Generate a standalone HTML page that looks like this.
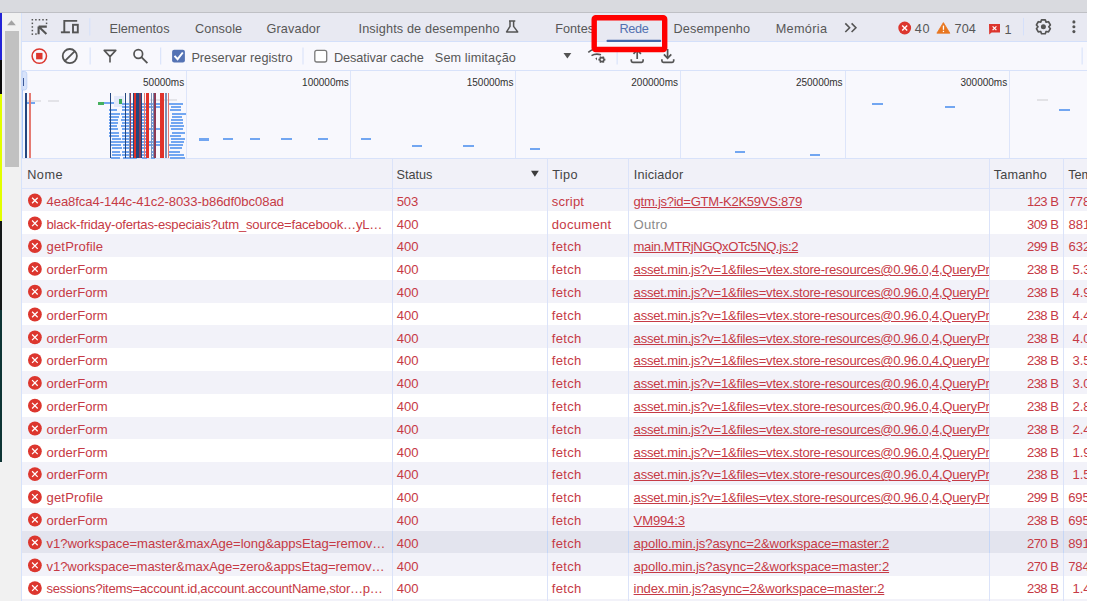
<!DOCTYPE html>
<html><head><meta charset="utf-8">
<style>
html,body{margin:0;padding:0;width:1093px;height:601px;overflow:hidden;background:#ffffff;}
body{position:relative;font-family:"Liberation Sans",sans-serif;}
.a{position:absolute;}
.t{position:absolute;white-space:pre;font-family:"Liberation Sans",sans-serif;}
.clipw{position:absolute;overflow:hidden;}
.ov{position:absolute;left:0;top:0;}
.ic{position:absolute;left:0;top:0;}
</style></head><body>
<!-- top gray bar -->
<div class="a" style="left:0;top:0;width:1087px;height:12px;background:#d9dadf"></div>
<div class="a" style="left:0;top:12px;width:1087px;height:1px;background:#bfc0c5"></div>
<!-- left color strip -->
<div class="a" style="left:0;top:13px;width:2px;height:47px;background:#2424d6"></div>
<div class="a" style="left:0;top:60px;width:2px;height:34px;background:#0a0a0a"></div>
<div class="a" style="left:0;top:94px;width:2px;height:127px;background:#e2ff00"></div>
<div class="a" style="left:0;top:221px;width:2px;height:89px;background:#141818"></div>
<div class="a" style="left:0;top:310px;width:2px;height:152px;background:#0d3434"></div>
<div class="a" style="left:0;top:462px;width:2px;height:139px;background:#f1f1f1"></div>
<!-- scrollbar -->
<div class="a" style="left:2px;top:13px;width:19px;height:588px;background:#f1f1f1"></div>
<div class="a" style="left:5px;top:31px;width:14px;height:136px;background:#c1c1c1"></div>
<!-- panel -->
<div class="a" style="left:21px;top:13px;width:1px;height:588px;background:#d6e2fb"></div>
<div class="a" style="left:22px;top:13px;width:1065px;height:28px;background:#e8e9f2"></div>
<div class="a" style="left:22px;top:41px;width:1065px;height:1px;background:#d4e0fa"></div>
<div class="a" style="left:22px;top:42px;width:1065px;height:28px;background:#f8f8fd"></div>
<div class="a" style="left:22px;top:70px;width:1065px;height:1px;background:#d8e2fa"></div>
<div class="a" style="left:22px;top:71px;width:1065px;height:87px;background:#f8f8fd"></div>
<div class="a" style="left:22px;top:158px;width:1065px;height:1px;background:#d8e2fa"></div>
<div class="a" style="left:22px;top:159px;width:1065px;height:29px;background:#f1f1f8"></div>
<div class="a" style="left:22px;top:188px;width:1065px;height:1px;background:#dce4fa"></div>
<div class="a" style="left:22px;top:189px;width:1065px;height:22px;background:#f2f2f9"></div>
<div class="a" style="left:22px;top:211px;width:1065px;height:23px;background:#ffffff"></div>
<div class="a" style="left:22px;top:234px;width:1065px;height:23px;background:#f2f2f9"></div>
<div class="a" style="left:22px;top:257px;width:1065px;height:23px;background:#ffffff"></div>
<div class="a" style="left:22px;top:280px;width:1065px;height:23px;background:#f2f2f9"></div>
<div class="a" style="left:22px;top:303px;width:1065px;height:22px;background:#ffffff"></div>
<div class="a" style="left:22px;top:325px;width:1065px;height:23px;background:#f2f2f9"></div>
<div class="a" style="left:22px;top:348px;width:1065px;height:23px;background:#ffffff"></div>
<div class="a" style="left:22px;top:371px;width:1065px;height:23px;background:#f2f2f9"></div>
<div class="a" style="left:22px;top:394px;width:1065px;height:23px;background:#ffffff"></div>
<div class="a" style="left:22px;top:417px;width:1065px;height:22px;background:#f2f2f9"></div>
<div class="a" style="left:22px;top:439px;width:1065px;height:23px;background:#ffffff"></div>
<div class="a" style="left:22px;top:462px;width:1065px;height:23px;background:#f2f2f9"></div>
<div class="a" style="left:22px;top:485px;width:1065px;height:23px;background:#ffffff"></div>
<div class="a" style="left:22px;top:508px;width:1065px;height:23px;background:#f2f2f9"></div>
<div class="a" style="left:22px;top:531px;width:1065px;height:22px;background:#e3e4ee"></div>
<div class="a" style="left:22px;top:553px;width:1065px;height:23px;background:#f2f2f9"></div>
<div class="a" style="left:22px;top:576px;width:1065px;height:23px;background:#ffffff"></div>
<div class="a" style="left:22px;top:599px;width:1065px;height:23px;background:#f2f2f9"></div>
<div class="a" style="left:392px;top:159px;width:1px;height:442px;background:#dbe3f9"></div>
<div class="a" style="left:547px;top:159px;width:1px;height:442px;background:#dbe3f9"></div>
<div class="a" style="left:628px;top:159px;width:1px;height:442px;background:#dbe3f9"></div>
<div class="a" style="left:989px;top:159px;width:1px;height:442px;background:#dbe3f9"></div>
<div class="a" style="left:1063px;top:159px;width:1px;height:442px;background:#dbe3f9"></div>
<div class="a" style="left:392px;top:531px;width:1px;height:22px;background:#c5d6f6"></div>
<div class="a" style="left:547px;top:531px;width:1px;height:22px;background:#c5d6f6"></div>
<div class="a" style="left:628px;top:531px;width:1px;height:22px;background:#c5d6f6"></div>
<div class="a" style="left:989px;top:531px;width:1px;height:22px;background:#c5d6f6"></div>
<div class="a" style="left:1063px;top:531px;width:1px;height:22px;background:#c5d6f6"></div>
<svg class="ov" width="1093" height="601" shape-rendering="crispEdges"><rect x="186" y="71" width="1" height="87" fill="#dde5fa"/><rect x="350" y="71" width="1" height="87" fill="#dde5fa"/><rect x="515" y="71" width="1" height="87" fill="#dde5fa"/><rect x="680" y="71" width="1" height="87" fill="#dde5fa"/><rect x="845" y="71" width="1" height="87" fill="#dde5fa"/><rect x="1009" y="71" width="1" height="87" fill="#dde5fa"/><path d="M22 71.5 H24.5 Q26.8 71.5 26.8 73.8 V87.7 Q26.8 90 24.5 90 H22 Z" fill="#d8e3fa" stroke="#b9cef6" stroke-width="0.8" shape-rendering="geometricPrecision"/><rect x="23" y="78" width="1.4" height="7.5" fill="#3d5a99"/><rect x="22" y="90" width="1.3" height="68" fill="#a9c6f7"/><rect x="26" y="99.5" width="15" height="2" fill="#e3e3e8"/><rect x="48" y="99.5" width="10.5" height="2" fill="#e3e3e8"/><rect x="150" y="99" width="27" height="2" fill="#e3e3e8"/><rect x="1037" y="99" width="10.5" height="2.2" fill="#e2e2e6"/><rect x="25.4" y="102.4" width="10" height="2" fill="#72a6f1"/><rect x="114" y="96.4" width="10" height="11" fill="#e3e9fb"/><rect x="118.9" y="98.7" width="3.5" height="5.6" fill="#3dab5a"/><rect x="98" y="102.4" width="6" height="2.2" fill="#46b05e"/><rect x="104" y="102.4" width="10" height="2.0" fill="#72a6f1"/><rect x="121.6" y="103.0" width="12.5" height="2" fill="#72a6f1"/><rect x="142" y="103.0" width="5" height="2" fill="#72a6f1"/><rect x="151" y="103.0" width="4" height="2" fill="#72a6f1"/><rect x="142" y="103.0" width="18" height="2" fill="#72a6f1"/><rect x="169.2" y="103.0" width="13.9" height="2" fill="#72a6f1"/><rect x="122.1" y="106.2" width="13.1" height="2" fill="#72a6f1"/><rect x="142" y="106.2" width="5" height="2" fill="#72a6f1"/><rect x="151" y="106.2" width="4" height="2" fill="#72a6f1"/><rect x="142" y="106.2" width="18" height="2" fill="#72a6f1"/><rect x="170.5" y="106.2" width="10.3" height="2" fill="#72a6f1"/><rect x="109.0" y="109.3" width="8.1" height="2" fill="#72a6f1"/><rect x="121.9" y="109.3" width="12.2" height="2" fill="#72a6f1"/><rect x="142" y="109.3" width="5" height="2" fill="#72a6f1"/><rect x="151" y="109.3" width="4" height="2" fill="#72a6f1"/><rect x="170.3" y="109.3" width="10.5" height="2" fill="#72a6f1"/><rect x="109.0" y="112.5" width="10.5" height="2" fill="#72a6f1"/><rect x="121.2" y="112.5" width="12.7" height="2" fill="#72a6f1"/><rect x="142" y="112.5" width="5" height="2" fill="#72a6f1"/><rect x="151" y="112.5" width="4" height="2" fill="#72a6f1"/><rect x="171.8" y="112.5" width="13.8" height="2" fill="#72a6f1"/><rect x="109.0" y="115.7" width="9.7" height="2" fill="#72a6f1"/><rect x="121.8" y="115.7" width="14.9" height="2" fill="#72a6f1"/><rect x="142" y="115.7" width="5" height="2" fill="#72a6f1"/><rect x="151" y="115.7" width="4" height="2" fill="#72a6f1"/><rect x="171.6" y="115.7" width="10.3" height="2" fill="#72a6f1"/><rect x="109.0" y="118.8" width="8.9" height="2" fill="#72a6f1"/><rect x="121.3" y="118.8" width="12.4" height="2" fill="#72a6f1"/><rect x="142" y="118.8" width="5" height="2" fill="#72a6f1"/><rect x="151" y="118.8" width="4" height="2" fill="#72a6f1"/><rect x="171.4" y="118.8" width="11.9" height="2" fill="#72a6f1"/><rect x="109.0" y="122.0" width="8.5" height="2" fill="#72a6f1"/><rect x="122.2" y="122.0" width="13.9" height="2" fill="#72a6f1"/><rect x="142" y="122.0" width="5" height="2" fill="#72a6f1"/><rect x="151" y="122.0" width="4" height="2" fill="#72a6f1"/><rect x="170.6" y="122.0" width="12.2" height="2" fill="#72a6f1"/><rect x="109.0" y="125.2" width="8.2" height="2" fill="#72a6f1"/><rect x="121.1" y="125.2" width="12.6" height="2" fill="#72a6f1"/><rect x="142" y="125.2" width="5" height="2" fill="#72a6f1"/><rect x="151" y="125.2" width="4" height="2" fill="#72a6f1"/><rect x="170.3" y="125.2" width="14.1" height="2" fill="#72a6f1"/><rect x="109.0" y="128.4" width="8.9" height="2" fill="#72a6f1"/><rect x="122.2" y="128.4" width="13.4" height="2" fill="#72a6f1"/><rect x="142" y="128.4" width="5" height="2" fill="#72a6f1"/><rect x="151" y="128.4" width="4" height="2" fill="#72a6f1"/><rect x="142" y="128.4" width="18" height="2" fill="#72a6f1"/><rect x="171.4" y="128.4" width="11.8" height="2" fill="#72a6f1"/><rect x="109.0" y="131.5" width="10.1" height="2" fill="#72a6f1"/><rect x="121.5" y="131.5" width="13.7" height="2" fill="#72a6f1"/><rect x="142" y="131.5" width="5" height="2" fill="#72a6f1"/><rect x="151" y="131.5" width="4" height="2" fill="#72a6f1"/><rect x="171.6" y="131.5" width="13.2" height="2" fill="#72a6f1"/><rect x="109.0" y="134.7" width="10.2" height="2" fill="#72a6f1"/><rect x="121.6" y="134.7" width="14.9" height="2" fill="#72a6f1"/><rect x="142" y="134.7" width="5" height="2" fill="#72a6f1"/><rect x="151" y="134.7" width="4" height="2" fill="#72a6f1"/><rect x="170.3" y="134.7" width="10.7" height="2" fill="#72a6f1"/><rect x="112.0" y="137.9" width="8.5" height="2" fill="#72a6f1"/><rect x="122.0" y="137.9" width="12.1" height="2" fill="#72a6f1"/><rect x="142" y="137.9" width="5" height="2" fill="#72a6f1"/><rect x="151" y="137.9" width="4" height="2" fill="#72a6f1"/><rect x="171.3" y="137.9" width="14.0" height="2" fill="#72a6f1"/><rect x="111.3" y="141.0" width="10.6" height="2" fill="#72a6f1"/><rect x="121.6" y="141.0" width="14.1" height="2" fill="#72a6f1"/><rect x="142" y="141.0" width="5" height="2" fill="#72a6f1"/><rect x="151" y="141.0" width="4" height="2" fill="#72a6f1"/><rect x="142" y="141.0" width="18" height="2" fill="#72a6f1"/><rect x="170.7" y="141.0" width="13.6" height="2" fill="#72a6f1"/><rect x="110.8" y="144.2" width="10.5" height="2" fill="#72a6f1"/><rect x="122.9" y="144.2" width="13.4" height="2" fill="#72a6f1"/><rect x="142" y="144.2" width="5" height="2" fill="#72a6f1"/><rect x="151" y="144.2" width="4" height="2" fill="#72a6f1"/><rect x="142" y="144.2" width="18" height="2" fill="#72a6f1"/><rect x="169.2" y="144.2" width="14.0" height="2" fill="#72a6f1"/><rect x="111.8" y="147.4" width="9.9" height="2" fill="#72a6f1"/><rect x="123.0" y="147.4" width="14.5" height="2" fill="#72a6f1"/><rect x="142" y="147.4" width="5" height="2" fill="#72a6f1"/><rect x="151" y="147.4" width="4" height="2" fill="#72a6f1"/><rect x="170.2" y="147.4" width="11.7" height="2" fill="#72a6f1"/><rect x="111.7" y="150.6" width="8.1" height="2" fill="#72a6f1"/><rect x="121.9" y="150.6" width="12.5" height="2" fill="#72a6f1"/><rect x="142" y="150.6" width="5" height="2" fill="#72a6f1"/><rect x="151" y="150.6" width="4" height="2" fill="#72a6f1"/><rect x="169.2" y="150.6" width="10.7" height="2" fill="#72a6f1"/><rect x="112.1" y="153.7" width="8.4" height="2" fill="#72a6f1"/><rect x="121.5" y="153.7" width="13.2" height="2" fill="#72a6f1"/><rect x="142" y="153.7" width="5" height="2" fill="#72a6f1"/><rect x="151" y="153.7" width="4" height="2" fill="#72a6f1"/><rect x="169.2" y="153.7" width="15.2" height="2" fill="#72a6f1"/><rect x="110.8" y="156.9" width="9.6" height="2" fill="#72a6f1"/><rect x="122.8" y="156.9" width="14.5" height="2" fill="#72a6f1"/><rect x="142" y="156.9" width="5" height="2" fill="#72a6f1"/><rect x="151" y="156.9" width="4" height="2" fill="#72a6f1"/><rect x="169.8" y="156.9" width="15.2" height="2" fill="#72a6f1"/><rect x="198.7" y="138" width="10.4" height="2.6" fill="#72a6f1"/><rect x="25.2" y="93" width="1.4" height="65" fill="#23467f"/><rect x="29.4" y="93" width="1.5" height="65" fill="#e57a72"/><rect x="110" y="93" width="1.3" height="65" fill="#23467f"/><rect x="125" y="93" width="1.3" height="65" fill="#23467f"/><rect x="128.5" y="93" width="1.0" height="65" fill="#7b8fb3"/><rect x="129.5" y="93" width="1.5" height="65" fill="#8c3a55"/><rect x="133" y="93" width="1.0" height="65" fill="#23467f"/><rect x="134" y="93" width="2.0" height="65" fill="#e0322a"/><rect x="136" y="93" width="3.0" height="65" fill="#23467f"/><rect x="139" y="93" width="2.0" height="65" fill="#8c3a55"/><rect x="141" y="93" width="1.3" height="65" fill="#23467f"/><rect x="143.7" y="93" width="1.3" height="65" fill="#e57a72"/><rect x="146" y="93" width="3.0" height="65" fill="#e0322a"/><rect x="151" y="93" width="1.0" height="65" fill="#7b8fb3"/><rect x="153" y="93" width="1.0" height="65" fill="#7b8fb3"/><rect x="154.3" y="93" width="1.3" height="65" fill="#8c3a55"/><rect x="160" y="93" width="4.0" height="65" fill="#e0322a"/><rect x="165.3" y="93" width="1.3" height="65" fill="#7b8fb3"/><rect x="167.5" y="93" width="1.3" height="65" fill="#e57a72"/><rect x="222.7" y="138.3" width="10.4" height="2.0" fill="#72a6f1"/><rect x="250" y="138.3" width="10.4" height="2.0" fill="#72a6f1"/><rect x="281.3" y="138.3" width="10.4" height="2.0" fill="#72a6f1"/><rect x="317.8" y="138.3" width="10.4" height="2.0" fill="#72a6f1"/><rect x="360.8" y="138.3" width="10.4" height="2.0" fill="#72a6f1"/><rect x="412" y="144.8" width="10.4" height="2.0" fill="#72a6f1"/><rect x="463.4" y="144.8" width="10.4" height="2.0" fill="#72a6f1"/><rect x="530" y="148.3" width="10.4" height="2.0" fill="#72a6f1"/><rect x="734.7" y="151.3" width="10.4" height="2.0" fill="#72a6f1"/><rect x="810" y="154.3" width="10.4" height="2.0" fill="#72a6f1"/><rect x="872.2" y="102.5" width="10.4" height="2.0" fill="#72a6f1"/><rect x="944.7" y="105.7" width="10.4" height="2.0" fill="#72a6f1"/><rect x="1059.2" y="109.1" width="10.4" height="2.0" fill="#72a6f1"/></svg>
<svg class="ic" width="1093" height="601"><path d="M7.2 25.2 L15.8 25.2 L11.5 20.2 Z" fill="#a3a3a3"/><rect x="31.60" y="19.0" width="1.5" height="1.5" fill="#545454"/><rect x="35.15" y="19.0" width="1.5" height="1.5" fill="#545454"/><rect x="38.70" y="19.0" width="1.5" height="1.5" fill="#545454"/><rect x="42.25" y="19.0" width="1.5" height="1.5" fill="#545454"/><rect x="45.80" y="19.0" width="1.5" height="1.5" fill="#545454"/><rect x="31.6" y="22.60" width="1.5" height="1.5" fill="#545454"/><rect x="31.6" y="26.20" width="1.5" height="1.5" fill="#545454"/><rect x="31.6" y="29.80" width="1.5" height="1.5" fill="#545454"/><rect x="31.6" y="33.40" width="1.5" height="1.5" fill="#545454"/><rect x="45.8" y="22.6" width="1.5" height="1.5" fill="#545454"/><rect x="35.2" y="33.3" width="1.5" height="1.5" fill="#545454"/><path d="M38.6 26.6 H46.8 M38.6 26.6 V34.2 M38.6 26.6 L46.4 34.0" stroke="#545454" stroke-width="2.1" fill="none"/><path d="M64.3 33 V20.9 H77.2" stroke="#545454" stroke-width="1.9" fill="none"/><path d="M60.9 32.3 H69.9" stroke="#545454" stroke-width="1.9" fill="none"/><rect x="73" y="24.8" width="4.8" height="7.6" stroke="#545454" stroke-width="1.9" fill="none"/><rect x="89.3" y="18.2" width="1" height="17.3" fill="#d5e0fa"/><path d="M509 21 H515.3 M510 21.3 V26.4 L506.6 31.9 H517.7 L513.6 26.4 V21.3" stroke="#545454" stroke-width="1.5" fill="none" stroke-linejoin="round"/><path d="M845.3 23.4 L849.6 27.7 L845.3 32 M851.6 23.4 L855.9 27.7 L851.6 32" stroke="#545454" stroke-width="1.6" fill="none"/><circle cx="904.7" cy="28" r="6.4" fill="#dc362e"/><path d="M902.2 25.5 L907.2 30.5 M907.2 25.5 L902.2 30.5" stroke="#fff" stroke-width="1.4"/><path d="M943.4 22.6 L949.9 33.2 H936.9 Z" fill="#e8761f" stroke="#e8761f" stroke-width="0.8" stroke-linejoin="round"/><rect x="942.8" y="25.6" width="1.3" height="4.2" fill="#fff"/><rect x="942.8" y="30.8" width="1.3" height="1.3" fill="#fff"/><path d="M989 24 H1000 V32.4 H991.6 L989.2 34.6 Z" fill="#dc362e"/><path d="M992.6 26.3 L996.4 30.1 M996.4 26.3 L992.6 30.1" stroke="#fff" stroke-width="1.2"/><rect x="1023" y="17.9" width="1" height="17.5" fill="#d5e0fa"/><path d="M1041.55 19.84 L1045.25 19.84 L1046.08 22.11 L1046.12 22.13 L1048.50 21.72 L1050.35 24.92 L1048.80 26.78 L1048.80 26.82 L1050.35 28.68 L1048.50 31.88 L1046.12 31.47 L1046.08 31.49 L1045.25 33.76 L1041.55 33.76 L1040.72 31.49 L1040.68 31.47 L1038.30 31.88 L1036.45 28.68 L1038.00 26.82 L1038.00 26.78 L1036.45 24.92 L1038.30 21.72 L1040.68 22.13 L1040.72 22.11 Z" fill="none" stroke="#545454" stroke-width="1.7" stroke-linejoin="round"/><circle cx="1043.4" cy="26.8" r="2.5" fill="#545454"/><circle cx="1073.9" cy="21.9" r="1.55" fill="#545454"/><circle cx="1073.9" cy="26.8" r="1.55" fill="#545454"/><circle cx="1073.9" cy="31.6" r="1.55" fill="#545454"/><rect x="606.5" y="39.8" width="54.7" height="2.2" rx="1" fill="#4467ab"/><circle cx="39.3" cy="56.1" r="7.2" fill="none" stroke="#dc362e" stroke-width="1.5"/><rect x="36.1" y="52.9" width="6.4" height="6.4" fill="#dc362e"/><circle cx="69.8" cy="56.1" r="7.1" fill="none" stroke="#545454" stroke-width="1.8"/><path d="M65 60.9 L74.6 51.3" stroke="#545454" stroke-width="1.8"/><rect x="89.6" y="47.5" width="1" height="17" fill="#d5e0fa"/><rect x="160.2" y="47.5" width="1" height="17" fill="#d5e0fa"/><rect x="302.5" y="47.5" width="1" height="17" fill="#d5e0fa"/><rect x="616.6" y="47.5" width="1" height="17" fill="#d5e0fa"/><rect x="1081.6" y="47.5" width="1" height="17" fill="#d5e0fa"/><path d="M104.2 50.4 H115.8 L110 56.6 Z M110 56.4 V62.6" stroke="#545454" stroke-width="1.6" fill="none" stroke-linejoin="round"/><circle cx="138.3" cy="54.0" r="4.3" fill="none" stroke="#545454" stroke-width="1.7"/><path d="M141.4 57.2 L147.4 63.2" stroke="#545454" stroke-width="1.8"/><rect x="172.1" y="49.7" width="12.8" height="12.8" rx="2" fill="#5573b4"/><path d="M174.5 55.8 L177.6 59.2 L182.8 52.5" stroke="#fff" stroke-width="2" fill="none"/><rect x="314.8" y="50.4" width="11.9" height="11.6" rx="2" fill="#fff" stroke="#7a7a7a" stroke-width="1.3"/><path d="M563.5 53.1 H571.3 L567.4 58.4 Z" fill="#545454"/><path d="M588.3 52.4 Q596 46 604 50" stroke="#545454" stroke-width="1.6" fill="none"/><path d="M591.5 55.6 Q595.5 53.2 601 54.8" stroke="#545454" stroke-width="1.6" fill="none"/><path d="M595.3 58.3 L597 57.6 L597 60.4 Z" fill="#545454"/><path d="M605.39 58.71 L605.39 60.49 L604.33 60.77 L604.13 61.12 L604.42 62.18 L602.87 63.07 L602.10 62.29 L601.70 62.29 L600.93 63.07 L599.38 62.18 L599.67 61.12 L599.47 60.77 L598.41 60.49 L598.41 58.71 L599.47 58.43 L599.67 58.08 L599.38 57.02 L600.93 56.13 L601.70 56.91 L602.10 56.91 L602.87 56.13 L604.42 57.02 L604.13 58.08 L604.33 58.43 Z" fill="#545454"/><circle cx="601.9" cy="59.6" r="1.2" fill="#f8f8fd"/><path d="M631.3 59.2 V60.8 Q631.3 62.3 632.8 62.3 H641.6 Q643.1 62.3 643.1 60.8 V59.2" stroke="#545454" stroke-width="1.7" fill="none"/><path d="M637.2 50 V59" stroke="#545454" stroke-width="1.7"/><path d="M633.5 53.8 L637.2 50 L640.9 53.8" stroke="#545454" stroke-width="1.7" fill="none"/><path d="M661.9 59.2 V60.8 Q661.9 62.3 663.4 62.3 H672.2 Q673.7 62.3 673.7 60.8 V59.2" stroke="#545454" stroke-width="1.7" fill="none"/><path d="M667.6 49 V58" stroke="#545454" stroke-width="1.7"/><path d="M663.9 54.4 L667.6 58.2 L671.3 54.4" stroke="#545454" stroke-width="1.7" fill="none"/><path d="M531 170.8 H538.8 L534.9 176.7 Z" fill="#3c3c3c"/><circle cx="34.9" cy="200.50" r="6.9" fill="#dc362e"/><path d="M32.1 197.70 L37.7 203.30 M37.7 197.70 L32.1 203.30" stroke="#fff" stroke-width="1.25"/><circle cx="34.9" cy="223.30" r="6.9" fill="#dc362e"/><path d="M32.1 220.50 L37.7 226.10 M37.7 220.50 L32.1 226.10" stroke="#fff" stroke-width="1.25"/><circle cx="34.9" cy="246.10" r="6.9" fill="#dc362e"/><path d="M32.1 243.30 L37.7 248.90 M37.7 243.30 L32.1 248.90" stroke="#fff" stroke-width="1.25"/><circle cx="34.9" cy="268.90" r="6.9" fill="#dc362e"/><path d="M32.1 266.10 L37.7 271.70 M37.7 266.10 L32.1 271.70" stroke="#fff" stroke-width="1.25"/><circle cx="34.9" cy="291.70" r="6.9" fill="#dc362e"/><path d="M32.1 288.90 L37.7 294.50 M37.7 288.90 L32.1 294.50" stroke="#fff" stroke-width="1.25"/><circle cx="34.9" cy="314.50" r="6.9" fill="#dc362e"/><path d="M32.1 311.70 L37.7 317.30 M37.7 311.70 L32.1 317.30" stroke="#fff" stroke-width="1.25"/><circle cx="34.9" cy="337.30" r="6.9" fill="#dc362e"/><path d="M32.1 334.50 L37.7 340.10 M37.7 334.50 L32.1 340.10" stroke="#fff" stroke-width="1.25"/><circle cx="34.9" cy="360.10" r="6.9" fill="#dc362e"/><path d="M32.1 357.30 L37.7 362.90 M37.7 357.30 L32.1 362.90" stroke="#fff" stroke-width="1.25"/><circle cx="34.9" cy="382.90" r="6.9" fill="#dc362e"/><path d="M32.1 380.10 L37.7 385.70 M37.7 380.10 L32.1 385.70" stroke="#fff" stroke-width="1.25"/><circle cx="34.9" cy="405.70" r="6.9" fill="#dc362e"/><path d="M32.1 402.90 L37.7 408.50 M37.7 402.90 L32.1 408.50" stroke="#fff" stroke-width="1.25"/><circle cx="34.9" cy="428.50" r="6.9" fill="#dc362e"/><path d="M32.1 425.70 L37.7 431.30 M37.7 425.70 L32.1 431.30" stroke="#fff" stroke-width="1.25"/><circle cx="34.9" cy="451.30" r="6.9" fill="#dc362e"/><path d="M32.1 448.50 L37.7 454.10 M37.7 448.50 L32.1 454.10" stroke="#fff" stroke-width="1.25"/><circle cx="34.9" cy="474.10" r="6.9" fill="#dc362e"/><path d="M32.1 471.30 L37.7 476.90 M37.7 471.30 L32.1 476.90" stroke="#fff" stroke-width="1.25"/><circle cx="34.9" cy="496.90" r="6.9" fill="#dc362e"/><path d="M32.1 494.10 L37.7 499.70 M37.7 494.10 L32.1 499.70" stroke="#fff" stroke-width="1.25"/><circle cx="34.9" cy="519.70" r="6.9" fill="#dc362e"/><path d="M32.1 516.90 L37.7 522.50 M37.7 516.90 L32.1 522.50" stroke="#fff" stroke-width="1.25"/><circle cx="34.9" cy="542.50" r="6.9" fill="#dc362e"/><path d="M32.1 539.70 L37.7 545.30 M37.7 539.70 L32.1 545.30" stroke="#fff" stroke-width="1.25"/><circle cx="34.9" cy="565.30" r="6.9" fill="#dc362e"/><path d="M32.1 562.50 L37.7 568.10 M37.7 562.50 L32.1 568.10" stroke="#fff" stroke-width="1.25"/><circle cx="34.9" cy="588.10" r="6.9" fill="#dc362e"/><path d="M32.1 585.30 L37.7 590.90 M37.7 585.30 L32.1 590.90" stroke="#fff" stroke-width="1.25"/></svg>
<span class="t" style="font-size:12.7px;line-height:12.7px;top:22.55px;color:#575757;letter-spacing:0.027px;left:109.40px;">Elementos</span>
<span class="t" style="font-size:12.7px;line-height:12.7px;top:22.55px;color:#575757;letter-spacing:0.105px;left:195.00px;">Console</span>
<span class="t" style="font-size:12.7px;line-height:12.7px;top:22.55px;color:#575757;letter-spacing:0.139px;left:266.40px;">Gravador</span>
<span class="t" style="font-size:12.7px;line-height:12.7px;top:22.55px;color:#575757;letter-spacing:0.130px;left:358.50px;">Insights de desempenho</span>
<span class="t" style="font-size:12.7px;line-height:12.7px;top:22.55px;color:#575757;letter-spacing:0.017px;left:555.20px;">Fontes</span>
<span class="t" style="font-size:12.7px;line-height:12.7px;top:22.55px;color:#5370b0;letter-spacing:-0.286px;left:619.40px;">Rede</span>
<span class="t" style="font-size:12.7px;line-height:12.7px;top:22.55px;color:#575757;letter-spacing:0.123px;left:673.50px;">Desempenho</span>
<span class="t" style="font-size:12.7px;line-height:12.7px;top:22.55px;color:#575757;letter-spacing:0.320px;left:775.70px;">Memória</span>
<span class="t" style="font-size:12.7px;line-height:12.7px;top:22.95px;color:#575757;letter-spacing:0.588px;left:914.80px;">40</span>
<span class="t" style="font-size:12.7px;line-height:12.7px;top:22.95px;color:#575757;letter-spacing:0.009px;left:954.60px;">704</span>
<span class="t" style="font-size:12.7px;line-height:12.7px;top:23.75px;color:#575757;letter-spacing:0.000px;left:1004.40px;">1</span>
<span class="t" style="font-size:12.7px;line-height:12.7px;top:51.65px;color:#575757;letter-spacing:0.021px;left:191.40px;">Preservar registro</span>
<span class="t" style="font-size:12.7px;line-height:12.7px;top:51.65px;color:#575757;letter-spacing:-0.091px;left:334.00px;">Desativar cache</span>
<span class="t" style="font-size:12.7px;line-height:12.7px;top:51.65px;color:#575757;letter-spacing:0.116px;left:434.80px;">Sem limitação</span>
<span class="t" style="font-size:10px;line-height:10px;top:78.44px;color:#303030;letter-spacing:0.000px;right:908.80px;">50000ms</span>
<span class="t" style="font-size:10px;line-height:10px;top:78.44px;color:#303030;letter-spacing:0.000px;right:744.20px;">100000ms</span>
<span class="t" style="font-size:10px;line-height:10px;top:78.44px;color:#303030;letter-spacing:0.000px;right:579.60px;">150000ms</span>
<span class="t" style="font-size:10px;line-height:10px;top:78.44px;color:#303030;letter-spacing:0.000px;right:415.00px;">200000ms</span>
<span class="t" style="font-size:10px;line-height:10px;top:78.44px;color:#303030;letter-spacing:0.000px;right:250.40px;">250000ms</span>
<span class="t" style="font-size:10px;line-height:10px;top:78.44px;color:#303030;letter-spacing:0.000px;right:85.80px;">300000ms</span>
<span class="t" style="font-size:12.7px;line-height:12.7px;top:168.75px;color:#444444;letter-spacing:0.489px;left:27.20px;">Nome</span>
<span class="t" style="font-size:12.7px;line-height:12.7px;top:168.75px;color:#444444;letter-spacing:-0.061px;left:396.60px;">Status</span>
<span class="t" style="font-size:12.7px;line-height:12.7px;top:168.75px;color:#444444;letter-spacing:0.370px;left:552.20px;">Tipo</span>
<span class="t" style="font-size:12.7px;line-height:12.7px;top:168.75px;color:#444444;letter-spacing:0.192px;left:633.80px;">Iniciador</span>
<span class="t" style="font-size:12.7px;line-height:12.7px;top:168.75px;color:#444444;letter-spacing:0.128px;left:993.80px;">Tamanho</span>
<div class="clipw" style="left:0;top:0;width:1087.0px;height:601px;"><span class="t" style="font-size:12.7px;line-height:12.7px;top:168.75px;color:#444444;letter-spacing:0.000px;left:1068.20px;">Tempo</span></div>
<span class="t" style="font-size:13.1px;line-height:13.1px;top:194.71px;color:#c63a45;letter-spacing:-0.082px;left:46.50px;">4ea8fca4-144c-41c2-8033-b86df0bc08ad</span>
<span class="t" style="font-size:13.1px;line-height:13.1px;top:194.71px;color:#c63a45;letter-spacing:-0.153px;left:396.70px;">503</span>
<span class="t" style="font-size:13.1px;line-height:13.1px;top:194.71px;color:#c63a45;letter-spacing:0.184px;left:551.80px;">script</span>
<span class="t" style="font-size:13.1px;line-height:13.1px;top:194.71px;color:#c63a45;letter-spacing:-0.295px;text-decoration:underline;left:633.60px;">gtm.js?id=GTM-K2K59VS:879</span>
<span class="t" style="font-size:13.1px;line-height:13.1px;top:194.71px;color:#c63a45;letter-spacing:-0.544px;left:1026.90px;">123 B</span>
<div class="clipw" style="left:0;top:0;width:1087.0px;height:601px;"><span class="t" style="font-size:13.1px;line-height:13.1px;top:194.71px;color:#c63a45;letter-spacing:-0.100px;left:1068.60px;">778 ms</span></div>
<span class="t" style="font-size:13.1px;line-height:13.1px;top:217.51px;color:#c63a45;letter-spacing:-0.205px;left:46.50px;">black-friday-ofertas-especiais?utm_source=facebook…yL…</span>
<span class="t" style="font-size:13.1px;line-height:13.1px;top:217.51px;color:#c63a45;letter-spacing:0.047px;left:396.70px;">400</span>
<span class="t" style="font-size:13.1px;line-height:13.1px;top:217.51px;color:#c63a45;letter-spacing:0.273px;left:551.80px;">document</span>
<span class="t" style="font-size:13.1px;line-height:13.1px;top:217.51px;color:#8a8a8a;letter-spacing:0.230px;left:633.60px;">Outro</span>
<span class="t" style="font-size:13.1px;line-height:13.1px;top:217.51px;color:#c63a45;letter-spacing:-0.544px;left:1026.90px;">309 B</span>
<div class="clipw" style="left:0;top:0;width:1087.0px;height:601px;"><span class="t" style="font-size:13.1px;line-height:13.1px;top:217.51px;color:#c63a45;letter-spacing:-0.100px;left:1068.60px;">881 ms</span></div>
<span class="t" style="font-size:13.1px;line-height:13.1px;top:240.31px;color:#c63a45;letter-spacing:0.147px;left:46.50px;">getProfile</span>
<span class="t" style="font-size:13.1px;line-height:13.1px;top:240.31px;color:#c63a45;letter-spacing:0.047px;left:396.70px;">400</span>
<span class="t" style="font-size:13.1px;line-height:13.1px;top:240.31px;color:#c63a45;letter-spacing:0.262px;left:551.80px;">fetch</span>
<span class="t" style="font-size:13.1px;line-height:13.1px;top:240.31px;color:#c63a45;letter-spacing:-0.391px;text-decoration:underline;left:633.60px;">main.MTRjNGQxOTc5NQ.js:2</span>
<span class="t" style="font-size:13.1px;line-height:13.1px;top:240.31px;color:#c63a45;letter-spacing:-0.544px;left:1026.90px;">299 B</span>
<div class="clipw" style="left:0;top:0;width:1087.0px;height:601px;"><span class="t" style="font-size:13.1px;line-height:13.1px;top:240.31px;color:#c63a45;letter-spacing:-0.100px;left:1068.60px;">632 ms</span></div>
<span class="t" style="font-size:13.1px;line-height:13.1px;top:263.11px;color:#c63a45;letter-spacing:0.019px;left:46.50px;">orderForm</span>
<span class="t" style="font-size:13.1px;line-height:13.1px;top:263.11px;color:#c63a45;letter-spacing:0.047px;left:396.70px;">400</span>
<span class="t" style="font-size:13.1px;line-height:13.1px;top:263.11px;color:#c63a45;letter-spacing:0.262px;left:551.80px;">fetch</span>
<div class="clipw" style="left:0;top:0;width:988.7px;height:601px;"><span class="t" style="font-size:13.1px;line-height:13.1px;top:263.11px;color:#c63a45;letter-spacing:-0.220px;text-decoration:underline;left:633.60px;">asset.min.js?v=1&amp;files=vtex.store-resources@0.96.0,4,QueryProfile</span></div>
<span class="t" style="font-size:13.1px;line-height:13.1px;top:263.11px;color:#c63a45;letter-spacing:-0.544px;left:1026.90px;">238 B</span>
<div class="clipw" style="left:0;top:0;width:1087.0px;height:601px;"><span class="t" style="font-size:13.1px;line-height:13.1px;top:263.11px;color:#c63a45;letter-spacing:-0.100px;left:1072.50px;">5.32 s</span></div>
<span class="t" style="font-size:13.1px;line-height:13.1px;top:285.91px;color:#c63a45;letter-spacing:0.019px;left:46.50px;">orderForm</span>
<span class="t" style="font-size:13.1px;line-height:13.1px;top:285.91px;color:#c63a45;letter-spacing:0.047px;left:396.70px;">400</span>
<span class="t" style="font-size:13.1px;line-height:13.1px;top:285.91px;color:#c63a45;letter-spacing:0.262px;left:551.80px;">fetch</span>
<div class="clipw" style="left:0;top:0;width:988.7px;height:601px;"><span class="t" style="font-size:13.1px;line-height:13.1px;top:285.91px;color:#c63a45;letter-spacing:-0.220px;text-decoration:underline;left:633.60px;">asset.min.js?v=1&amp;files=vtex.store-resources@0.96.0,4,QueryProfile</span></div>
<span class="t" style="font-size:13.1px;line-height:13.1px;top:285.91px;color:#c63a45;letter-spacing:-0.544px;left:1026.90px;">238 B</span>
<div class="clipw" style="left:0;top:0;width:1087.0px;height:601px;"><span class="t" style="font-size:13.1px;line-height:13.1px;top:285.91px;color:#c63a45;letter-spacing:-0.100px;left:1072.50px;">4.92 s</span></div>
<span class="t" style="font-size:13.1px;line-height:13.1px;top:308.71px;color:#c63a45;letter-spacing:0.019px;left:46.50px;">orderForm</span>
<span class="t" style="font-size:13.1px;line-height:13.1px;top:308.71px;color:#c63a45;letter-spacing:0.047px;left:396.70px;">400</span>
<span class="t" style="font-size:13.1px;line-height:13.1px;top:308.71px;color:#c63a45;letter-spacing:0.262px;left:551.80px;">fetch</span>
<div class="clipw" style="left:0;top:0;width:988.7px;height:601px;"><span class="t" style="font-size:13.1px;line-height:13.1px;top:308.71px;color:#c63a45;letter-spacing:-0.220px;text-decoration:underline;left:633.60px;">asset.min.js?v=1&amp;files=vtex.store-resources@0.96.0,4,QueryProfile</span></div>
<span class="t" style="font-size:13.1px;line-height:13.1px;top:308.71px;color:#c63a45;letter-spacing:-0.544px;left:1026.90px;">238 B</span>
<div class="clipw" style="left:0;top:0;width:1087.0px;height:601px;"><span class="t" style="font-size:13.1px;line-height:13.1px;top:308.71px;color:#c63a45;letter-spacing:-0.100px;left:1072.50px;">4.41 s</span></div>
<span class="t" style="font-size:13.1px;line-height:13.1px;top:331.51px;color:#c63a45;letter-spacing:0.019px;left:46.50px;">orderForm</span>
<span class="t" style="font-size:13.1px;line-height:13.1px;top:331.51px;color:#c63a45;letter-spacing:0.047px;left:396.70px;">400</span>
<span class="t" style="font-size:13.1px;line-height:13.1px;top:331.51px;color:#c63a45;letter-spacing:0.262px;left:551.80px;">fetch</span>
<div class="clipw" style="left:0;top:0;width:988.7px;height:601px;"><span class="t" style="font-size:13.1px;line-height:13.1px;top:331.51px;color:#c63a45;letter-spacing:-0.220px;text-decoration:underline;left:633.60px;">asset.min.js?v=1&amp;files=vtex.store-resources@0.96.0,4,QueryProfile</span></div>
<span class="t" style="font-size:13.1px;line-height:13.1px;top:331.51px;color:#c63a45;letter-spacing:-0.544px;left:1026.90px;">238 B</span>
<div class="clipw" style="left:0;top:0;width:1087.0px;height:601px;"><span class="t" style="font-size:13.1px;line-height:13.1px;top:331.51px;color:#c63a45;letter-spacing:-0.100px;left:1072.50px;">4.03 s</span></div>
<span class="t" style="font-size:13.1px;line-height:13.1px;top:354.31px;color:#c63a45;letter-spacing:0.019px;left:46.50px;">orderForm</span>
<span class="t" style="font-size:13.1px;line-height:13.1px;top:354.31px;color:#c63a45;letter-spacing:0.047px;left:396.70px;">400</span>
<span class="t" style="font-size:13.1px;line-height:13.1px;top:354.31px;color:#c63a45;letter-spacing:0.262px;left:551.80px;">fetch</span>
<div class="clipw" style="left:0;top:0;width:988.7px;height:601px;"><span class="t" style="font-size:13.1px;line-height:13.1px;top:354.31px;color:#c63a45;letter-spacing:-0.220px;text-decoration:underline;left:633.60px;">asset.min.js?v=1&amp;files=vtex.store-resources@0.96.0,4,QueryProfile</span></div>
<span class="t" style="font-size:13.1px;line-height:13.1px;top:354.31px;color:#c63a45;letter-spacing:-0.544px;left:1026.90px;">238 B</span>
<div class="clipw" style="left:0;top:0;width:1087.0px;height:601px;"><span class="t" style="font-size:13.1px;line-height:13.1px;top:354.31px;color:#c63a45;letter-spacing:-0.100px;left:1072.50px;">3.55 s</span></div>
<span class="t" style="font-size:13.1px;line-height:13.1px;top:377.11px;color:#c63a45;letter-spacing:0.019px;left:46.50px;">orderForm</span>
<span class="t" style="font-size:13.1px;line-height:13.1px;top:377.11px;color:#c63a45;letter-spacing:0.047px;left:396.70px;">400</span>
<span class="t" style="font-size:13.1px;line-height:13.1px;top:377.11px;color:#c63a45;letter-spacing:0.262px;left:551.80px;">fetch</span>
<div class="clipw" style="left:0;top:0;width:988.7px;height:601px;"><span class="t" style="font-size:13.1px;line-height:13.1px;top:377.11px;color:#c63a45;letter-spacing:-0.220px;text-decoration:underline;left:633.60px;">asset.min.js?v=1&amp;files=vtex.store-resources@0.96.0,4,QueryProfile</span></div>
<span class="t" style="font-size:13.1px;line-height:13.1px;top:377.11px;color:#c63a45;letter-spacing:-0.544px;left:1026.90px;">238 B</span>
<div class="clipw" style="left:0;top:0;width:1087.0px;height:601px;"><span class="t" style="font-size:13.1px;line-height:13.1px;top:377.11px;color:#c63a45;letter-spacing:-0.100px;left:1072.50px;">3.04 s</span></div>
<span class="t" style="font-size:13.1px;line-height:13.1px;top:399.91px;color:#c63a45;letter-spacing:0.019px;left:46.50px;">orderForm</span>
<span class="t" style="font-size:13.1px;line-height:13.1px;top:399.91px;color:#c63a45;letter-spacing:0.047px;left:396.70px;">400</span>
<span class="t" style="font-size:13.1px;line-height:13.1px;top:399.91px;color:#c63a45;letter-spacing:0.262px;left:551.80px;">fetch</span>
<div class="clipw" style="left:0;top:0;width:988.7px;height:601px;"><span class="t" style="font-size:13.1px;line-height:13.1px;top:399.91px;color:#c63a45;letter-spacing:-0.220px;text-decoration:underline;left:633.60px;">asset.min.js?v=1&amp;files=vtex.store-resources@0.96.0,4,QueryProfile</span></div>
<span class="t" style="font-size:13.1px;line-height:13.1px;top:399.91px;color:#c63a45;letter-spacing:-0.544px;left:1026.90px;">238 B</span>
<div class="clipw" style="left:0;top:0;width:1087.0px;height:601px;"><span class="t" style="font-size:13.1px;line-height:13.1px;top:399.91px;color:#c63a45;letter-spacing:-0.100px;left:1072.50px;">2.89 s</span></div>
<span class="t" style="font-size:13.1px;line-height:13.1px;top:422.71px;color:#c63a45;letter-spacing:0.019px;left:46.50px;">orderForm</span>
<span class="t" style="font-size:13.1px;line-height:13.1px;top:422.71px;color:#c63a45;letter-spacing:0.047px;left:396.70px;">400</span>
<span class="t" style="font-size:13.1px;line-height:13.1px;top:422.71px;color:#c63a45;letter-spacing:0.262px;left:551.80px;">fetch</span>
<div class="clipw" style="left:0;top:0;width:988.7px;height:601px;"><span class="t" style="font-size:13.1px;line-height:13.1px;top:422.71px;color:#c63a45;letter-spacing:-0.220px;text-decoration:underline;left:633.60px;">asset.min.js?v=1&amp;files=vtex.store-resources@0.96.0,4,QueryProfile</span></div>
<span class="t" style="font-size:13.1px;line-height:13.1px;top:422.71px;color:#c63a45;letter-spacing:-0.544px;left:1026.90px;">238 B</span>
<div class="clipw" style="left:0;top:0;width:1087.0px;height:601px;"><span class="t" style="font-size:13.1px;line-height:13.1px;top:422.71px;color:#c63a45;letter-spacing:-0.100px;left:1072.50px;">2.45 s</span></div>
<span class="t" style="font-size:13.1px;line-height:13.1px;top:445.51px;color:#c63a45;letter-spacing:0.019px;left:46.50px;">orderForm</span>
<span class="t" style="font-size:13.1px;line-height:13.1px;top:445.51px;color:#c63a45;letter-spacing:0.047px;left:396.70px;">400</span>
<span class="t" style="font-size:13.1px;line-height:13.1px;top:445.51px;color:#c63a45;letter-spacing:0.262px;left:551.80px;">fetch</span>
<div class="clipw" style="left:0;top:0;width:988.7px;height:601px;"><span class="t" style="font-size:13.1px;line-height:13.1px;top:445.51px;color:#c63a45;letter-spacing:-0.220px;text-decoration:underline;left:633.60px;">asset.min.js?v=1&amp;files=vtex.store-resources@0.96.0,4,QueryProfile</span></div>
<span class="t" style="font-size:13.1px;line-height:13.1px;top:445.51px;color:#c63a45;letter-spacing:-0.544px;left:1026.90px;">238 B</span>
<div class="clipw" style="left:0;top:0;width:1087.0px;height:601px;"><span class="t" style="font-size:13.1px;line-height:13.1px;top:445.51px;color:#c63a45;letter-spacing:-0.100px;left:1072.50px;">1.93 s</span></div>
<span class="t" style="font-size:13.1px;line-height:13.1px;top:468.31px;color:#c63a45;letter-spacing:0.019px;left:46.50px;">orderForm</span>
<span class="t" style="font-size:13.1px;line-height:13.1px;top:468.31px;color:#c63a45;letter-spacing:0.047px;left:396.70px;">400</span>
<span class="t" style="font-size:13.1px;line-height:13.1px;top:468.31px;color:#c63a45;letter-spacing:0.262px;left:551.80px;">fetch</span>
<div class="clipw" style="left:0;top:0;width:988.7px;height:601px;"><span class="t" style="font-size:13.1px;line-height:13.1px;top:468.31px;color:#c63a45;letter-spacing:-0.220px;text-decoration:underline;left:633.60px;">asset.min.js?v=1&amp;files=vtex.store-resources@0.96.0,4,QueryProfile</span></div>
<span class="t" style="font-size:13.1px;line-height:13.1px;top:468.31px;color:#c63a45;letter-spacing:-0.544px;left:1026.90px;">238 B</span>
<div class="clipw" style="left:0;top:0;width:1087.0px;height:601px;"><span class="t" style="font-size:13.1px;line-height:13.1px;top:468.31px;color:#c63a45;letter-spacing:-0.100px;left:1072.50px;">1.54 s</span></div>
<span class="t" style="font-size:13.1px;line-height:13.1px;top:491.11px;color:#c63a45;letter-spacing:0.147px;left:46.50px;">getProfile</span>
<span class="t" style="font-size:13.1px;line-height:13.1px;top:491.11px;color:#c63a45;letter-spacing:0.047px;left:396.70px;">400</span>
<span class="t" style="font-size:13.1px;line-height:13.1px;top:491.11px;color:#c63a45;letter-spacing:0.262px;left:551.80px;">fetch</span>
<div class="clipw" style="left:0;top:0;width:988.7px;height:601px;"><span class="t" style="font-size:13.1px;line-height:13.1px;top:491.11px;color:#c63a45;letter-spacing:-0.220px;text-decoration:underline;left:633.60px;">asset.min.js?v=1&amp;files=vtex.store-resources@0.96.0,4,QueryProfile</span></div>
<span class="t" style="font-size:13.1px;line-height:13.1px;top:491.11px;color:#c63a45;letter-spacing:-0.544px;left:1026.90px;">299 B</span>
<div class="clipw" style="left:0;top:0;width:1087.0px;height:601px;"><span class="t" style="font-size:13.1px;line-height:13.1px;top:491.11px;color:#c63a45;letter-spacing:-0.100px;left:1068.20px;">695 ms</span></div>
<span class="t" style="font-size:13.1px;line-height:13.1px;top:513.91px;color:#c63a45;letter-spacing:0.019px;left:46.50px;">orderForm</span>
<span class="t" style="font-size:13.1px;line-height:13.1px;top:513.91px;color:#c63a45;letter-spacing:0.047px;left:396.70px;">400</span>
<span class="t" style="font-size:13.1px;line-height:13.1px;top:513.91px;color:#c63a45;letter-spacing:0.262px;left:551.80px;">fetch</span>
<span class="t" style="font-size:13.1px;line-height:13.1px;top:513.91px;color:#c63a45;letter-spacing:-0.175px;text-decoration:underline;left:633.60px;">VM994:3</span>
<span class="t" style="font-size:13.1px;line-height:13.1px;top:513.91px;color:#c63a45;letter-spacing:-0.544px;left:1026.90px;">238 B</span>
<div class="clipw" style="left:0;top:0;width:1087.0px;height:601px;"><span class="t" style="font-size:13.1px;line-height:13.1px;top:513.91px;color:#c63a45;letter-spacing:-0.100px;left:1068.20px;">695 ms</span></div>
<span class="t" style="font-size:13.1px;line-height:13.1px;top:536.71px;color:#c63a45;letter-spacing:-0.060px;left:46.50px;">v1?workspace=master&amp;maxAge=long&amp;appsEtag=remov…</span>
<span class="t" style="font-size:13.1px;line-height:13.1px;top:536.71px;color:#c63a45;letter-spacing:0.047px;left:396.70px;">400</span>
<span class="t" style="font-size:13.1px;line-height:13.1px;top:536.71px;color:#c63a45;letter-spacing:0.262px;left:551.80px;">fetch</span>
<span class="t" style="font-size:13.1px;line-height:13.1px;top:536.71px;color:#c63a45;letter-spacing:-0.090px;text-decoration:underline;left:633.60px;">apollo.min.js?async=2&amp;workspace=master:2</span>
<span class="t" style="font-size:13.1px;line-height:13.1px;top:536.71px;color:#c63a45;letter-spacing:-0.544px;left:1026.90px;">270 B</span>
<div class="clipw" style="left:0;top:0;width:1087.0px;height:601px;"><span class="t" style="font-size:13.1px;line-height:13.1px;top:536.71px;color:#c63a45;letter-spacing:-0.100px;left:1068.20px;">891 ms</span></div>
<span class="t" style="font-size:13.1px;line-height:13.1px;top:559.51px;color:#c63a45;letter-spacing:-0.094px;left:46.50px;">v1?workspace=master&amp;maxAge=zero&amp;appsEtag=remov…</span>
<span class="t" style="font-size:13.1px;line-height:13.1px;top:559.51px;color:#c63a45;letter-spacing:0.047px;left:396.70px;">400</span>
<span class="t" style="font-size:13.1px;line-height:13.1px;top:559.51px;color:#c63a45;letter-spacing:0.262px;left:551.80px;">fetch</span>
<span class="t" style="font-size:13.1px;line-height:13.1px;top:559.51px;color:#c63a45;letter-spacing:-0.090px;text-decoration:underline;left:633.60px;">apollo.min.js?async=2&amp;workspace=master:2</span>
<span class="t" style="font-size:13.1px;line-height:13.1px;top:559.51px;color:#c63a45;letter-spacing:-0.544px;left:1026.90px;">270 B</span>
<div class="clipw" style="left:0;top:0;width:1087.0px;height:601px;"><span class="t" style="font-size:13.1px;line-height:13.1px;top:559.51px;color:#c63a45;letter-spacing:-0.100px;left:1068.20px;">784 ms</span></div>
<span class="t" style="font-size:13.1px;line-height:13.1px;top:582.31px;color:#c63a45;letter-spacing:-0.255px;left:46.50px;">sessions?items=account.id,account.accountName,stor…p…</span>
<span class="t" style="font-size:13.1px;line-height:13.1px;top:582.31px;color:#c63a45;letter-spacing:0.047px;left:396.70px;">400</span>
<span class="t" style="font-size:13.1px;line-height:13.1px;top:582.31px;color:#c63a45;letter-spacing:0.262px;left:551.80px;">fetch</span>
<span class="t" style="font-size:13.1px;line-height:13.1px;top:582.31px;color:#c63a45;letter-spacing:-0.122px;text-decoration:underline;left:633.60px;">index.min.js?async=2&amp;workspace=master:2</span>
<span class="t" style="font-size:13.1px;line-height:13.1px;top:582.31px;color:#c63a45;letter-spacing:-0.544px;left:1026.90px;">238 B</span>
<div class="clipw" style="left:0;top:0;width:1087.0px;height:601px;"><span class="t" style="font-size:13.1px;line-height:13.1px;top:582.31px;color:#c63a45;letter-spacing:-0.100px;left:1072.50px;">1.43 s</span></div>
<!-- red annotation rectangle -->
<svg class="ic" width="1093" height="601"><rect x="594.2" y="17.7" width="70.5" height="31.8" rx="1.5" fill="none" stroke="#ff0000" stroke-width="5.4"/></svg>
</body></html>
